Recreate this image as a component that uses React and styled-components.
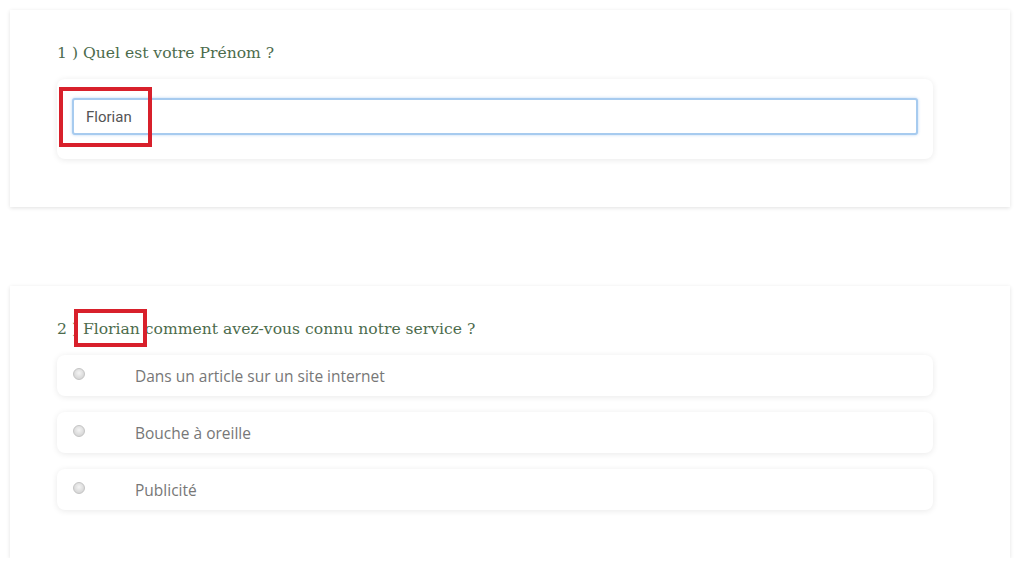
import React from 'react';
import styled, { createGlobalStyle } from 'styled-components';

const GlobalStyle = createGlobalStyle`
  html, body {
    margin: 0;
    padding: 0;
    background: #ffffff;
  }
  body {
    font-family: 'Open Sans', sans-serif;
  }
`;

const Page = styled.div`
  width: 1024px;
  padding: 10px 14px 0 10px;
  box-sizing: border-box;
  display: flex;
  flex-direction: column;
  gap: 79px;
`;

const Card = styled.section`
  position: relative;
  background: #fff;
  box-shadow: 0 1px 4px rgba(0, 0, 0, 0.12);
  padding: 33px 77px 48px 47px;
`;

const Question = styled.h2`
  margin: 0 0 16px;
  font-family: 'DejaVu Serif', Georgia, serif;
  font-weight: normal;
  font-size: 15.6px;
  line-height: 20px;
  color: #4c6b4c;
`;

const InputBox = styled.div`
  border-radius: 8px;
  box-shadow: 0 1px 6px rgba(0, 0, 0, 0.09);
  padding: 19px 15px 24px;
`;

const TextInput = styled.input`
  display: block;
  width: 100%;
  box-sizing: border-box;
  height: 37px;
  border: 2px solid #a7cbef;
  border-radius: 3px;
  box-shadow: 0 0 3px rgba(100, 160, 230, 0.45);
  padding: 0 12px;
  font-family: 'Roboto', sans-serif;
  font-size: 15px;
  color: #555;
  outline: none;
`;

const Options = styled.div`
  display: flex;
  flex-direction: column;
  gap: 16px;
`;

const Option = styled.label`
  display: flex;
  align-items: center;
  height: 41px;
  border-radius: 8px;
  box-shadow: 0 1px 6px rgba(0, 0, 0, 0.09);
  padding-left: 16px;
  font-family: 'Open Sans', sans-serif;
  font-size: 15.5px;
  color: #777;
`;

const Radio = styled.span`
  flex: none;
  width: 12px;
  height: 12px;
  border-radius: 50%;
  border: 1px solid #c4c4c4;
  background: radial-gradient(circle at 50% 40%, #f4f4f4 0%, #dcdcdc 60%, #cfcfcf 100%);
  box-sizing: border-box;
  margin-right: 50px;
  margin-top: -3px;
`;

const Highlight = styled.div`
  position: absolute;
  left: ${p => p.$x}px;
  top: ${p => p.$y}px;
  width: ${p => p.$w}px;
  height: ${p => p.$h}px;
  border: 4px solid #d8202b;
  box-sizing: border-box;
  pointer-events: none;
`;

const options = ['Dans un article sur un site internet', 'Bouche à oreille', 'Publicité'];

export default function App() {
  return (
    <>
      <GlobalStyle />
      <Page>
        <Card>
          <Question>1 ) Quel est votre Prénom ?</Question>
          <InputBox>
            <TextInput defaultValue="Florian" />
          </InputBox>
          <Highlight $x={49} $y={77} $w={93} $h={60} />
        </Card>
        <Card>
          <Question>2 ) Florian comment avez-vous connu notre service ?</Question>
          <Options>
            {options.map(o => (
              <Option key={o}>
                <Radio />
                {o}
              </Option>
            ))}
          </Options>
          <Highlight $x={64} $y={23} $w={73} $h={38} />
        </Card>
      </Page>
    </>
  );
}
